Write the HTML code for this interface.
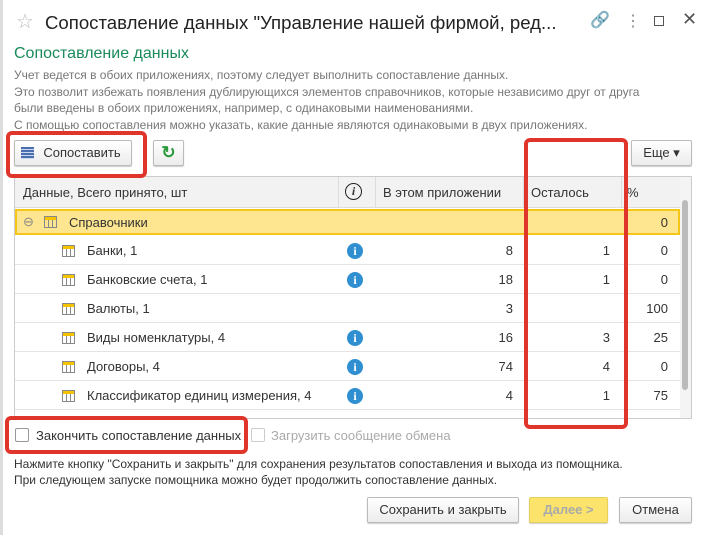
<!DOCTYPE html><html><head><meta charset="utf-8"><style>
*{box-sizing:border-box}body{margin:0;width:709px;height:535px;background:#fff;font-family:"Liberation Sans",sans-serif;position:relative;overflow:hidden;color:#333}
.a{position:absolute}
.btn{position:absolute;border:1px solid #bbb;border-radius:2px;background:linear-gradient(#fff,#ececec);box-shadow:0 1px 1px #ccc;font-size:13px;text-align:center;line-height:24px;color:#333}
.red{position:absolute;border:4px solid #e0352b;border-radius:6px}
.row{position:absolute;left:15px;width:665px;height:29px;border-bottom:1px solid #e4e4e4;font-size:13px}
.row span{position:absolute;top:7px}
.ic{position:absolute;width:13px;height:12px;border:1px solid #888;background:linear-gradient(#f5c400 0 3px,transparent 3px),repeating-linear-gradient(90deg,transparent 0 3px,#888 3px 4px);}
.inf{position:absolute;left:332px;top:7px;width:16px;height:16px;border-radius:50%;background:#2f8fd0;color:#fff;font-weight:bold;font-size:12px;text-align:center;line-height:16px;font-family:"Liberation Serif",serif}
</style></head><body>
<div class="a" style="left:0;top:0;width:3px;height:535px;background:#ddd"></div>
<div class="a" style="left:16px;top:9px;font-size:20px;color:#bbb">☆</div>
<div class="a" style="left:45px;top:12px;font-size:18.6px;color:#222;white-space:nowrap">Сопоставление данных "Управление нашей фирмой, ред...</div>
<div class="a" style="left:590px;top:10px;font-size:16px;color:#999">🔗</div>
<div class="a" style="left:625px;top:11px;font-size:16px;color:#888">⋮</div>
<div class="a" style="left:654px;top:16px;width:10px;height:10px;border:1px solid #555"></div>
<div class="a" style="left:682px;top:9px;font-size:18px;color:#555">✕</div>
<div class="a" style="left:14px;top:45px;font-size:16px;color:#1a8a5a">Сопоставление данных</div>
<div class="a" style="left:14px;top:67px;font-size:12px;line-height:16.7px;color:#777">Учет ведется в обоих приложениях, поэтому следует выполнить сопоставление данных.<br>Это позволит избежать появления дублирующихся элементов справочников, которые независимо друг от друга<br>были введены в обоих приложениях, например, с одинаковыми наименованиями.<br>С помощью сопоставления можно указать, какие данные являются одинаковыми в двух приложениях.</div>
<div class="btn" style="left:14px;top:140px;width:118px;height:26px;padding-left:18px">Сопоставить</div>
<div class="a" style="left:21px;top:147px;width:13px;height:12px;background:repeating-linear-gradient(#4a6fb0 0 2px,#cdd8ec 2px 3px)"></div>
<div class="btn" style="left:153px;top:140px;width:31px;height:26px;color:#2a9a3a;font-size:17px;font-weight:bold">↻</div>
<div class="btn" style="left:631px;top:140px;width:61px;height:26px">Еще ▾</div>
<div class="a" style="left:14px;top:176px;width:678px;height:243px;border:1px solid #ccc"></div>
<div class="a" style="left:15px;top:177px;width:665px;height:31px;background:#f2f2f2;border-bottom:1px solid #ddd;font-size:13px">
<span class="a" style="left:8px;top:8px">Данные, Всего принято, шт</span>
<span class="a" style="left:330px;top:6px;width:17px;height:17px;border:1.5px solid #222;border-radius:50%;text-align:center;font-weight:bold;font-size:12px;line-height:15px;font-family:'Liberation Serif',serif;font-style:italic">i</span>
<span class="a" style="left:368px;top:8px">В этом приложении</span>
<span class="a" style="left:516px;top:8px">Осталось</span>
<span class="a" style="left:612px;top:8px">%</span>
<div class="a" style="left:323px;top:0;width:1px;height:31px;background:#ddd"></div><div class="a" style="left:360px;top:0;width:1px;height:31px;background:#ddd"></div><div class="a" style="left:508px;top:0;width:1px;height:31px;background:#ddd"></div><div class="a" style="left:606px;top:0;width:1px;height:31px;background:#ddd"></div></div>
<div class="a" style="left:680px;top:177px;width:11px;height:241px;background:#f4f4f4"></div>
<div class="a" style="left:682px;top:200px;width:6px;height:190px;background:#bbb;border-radius:3px"></div>
<div class="row" style="top:209px;height:26px;background:#fde68f;border:2px solid #f5c518">
<span style="left:6px;top:3px;color:#888">⊖</span><div class="ic" style="left:27px;top:5px"></div><span style="left:52px;top:4px">Справочники</span><span style="right:10px;top:4px">0</span></div>
<div class="row" style="top:236px"><div class="ic" style="left:47px;top:9px"></div><span style="left:72px">Банки, 1</span><div class="inf">i</div><span style="right:167px">8</span><span style="right:70px">1</span><span style="right:12px">0</span></div>
<div class="row" style="top:265px"><div class="ic" style="left:47px;top:9px"></div><span style="left:72px">Банковские счета, 1</span><div class="inf">i</div><span style="right:167px">18</span><span style="right:70px">1</span><span style="right:12px">0</span></div>
<div class="row" style="top:294px"><div class="ic" style="left:47px;top:9px"></div><span style="left:72px">Валюты, 1</span><span style="right:167px">3</span><span style="right:12px">100</span></div>
<div class="row" style="top:323px"><div class="ic" style="left:47px;top:9px"></div><span style="left:72px">Виды номенклатуры, 4</span><div class="inf">i</div><span style="right:167px">16</span><span style="right:70px">3</span><span style="right:12px">25</span></div>
<div class="row" style="top:352px"><div class="ic" style="left:47px;top:9px"></div><span style="left:72px">Договоры, 4</span><div class="inf">i</div><span style="right:167px">74</span><span style="right:70px">4</span><span style="right:12px">0</span></div>
<div class="row" style="top:381px"><div class="ic" style="left:47px;top:9px"></div><span style="left:72px">Классификатор единиц измерения, 4</span><div class="inf">i</div><span style="right:167px">4</span><span style="right:70px">1</span><span style="right:12px">75</span></div>
<div class="a" style="left:15px;top:428px;width:14px;height:14px;border:1px solid #999;border-radius:2px"></div>
<div class="a" style="left:36px;top:428px;font-size:13px">Закончить сопоставление данных</div>
<div class="a" style="left:251px;top:428px;width:14px;height:14px;border:1px solid #ccc;border-radius:2px"></div>
<div class="a" style="left:271px;top:428px;font-size:13px;color:#aaa">Загрузить сообщение обмена</div>
<div class="a" style="left:14px;top:456px;font-size:12px;line-height:16px;color:#333">Нажмите кнопку "Сохранить и закрыть" для сохранения результатов сопоставления и выхода из помощника.<br>При следующем запуске помощника можно будет продолжить сопоставление данных.</div>
<div class="btn" style="left:367px;top:497px;width:152px;height:26px">Сохранить и закрыть</div>
<div class="btn" style="left:529px;top:497px;width:79px;height:26px;background:#fbe36c;border-color:#e6cf5a;color:#aaa;font-weight:bold">Далее &gt;</div>
<div class="btn" style="left:619px;top:497px;width:73px;height:26px">Отмена</div>
<div class="red" style="left:6px;top:131px;width:141px;height:47px"></div>
<div class="red" style="left:524px;top:138px;width:104px;height:291px"></div>
<div class="red" style="left:5px;top:416px;width:243px;height:38px"></div>
</body></html>
